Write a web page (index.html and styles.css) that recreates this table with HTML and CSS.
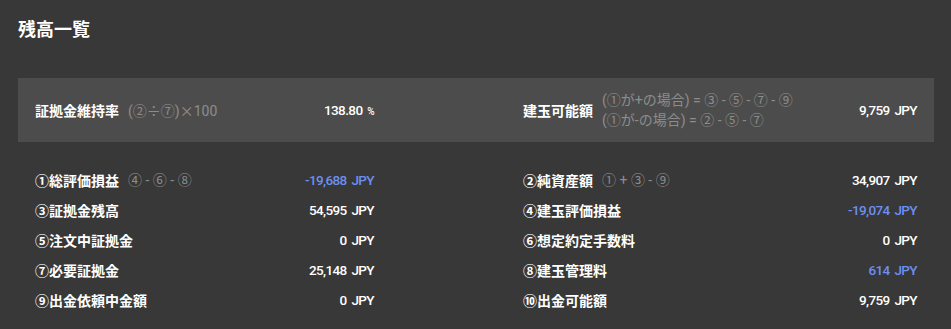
FILE: index.html
```html
<!DOCTYPE html>
<html lang="ja">
<head>
<meta charset="utf-8">
<title>残高一覧</title>
<link rel="stylesheet" href="styles.css">
</head>
<body>
<div class="page">
  <h1 class="title">残高一覧</h1>
  <div class="summary">
    <div class="cell">
      <span class="label">証拠金維持率</span>
      <span class="formula">(②<span class="sym">÷</span>⑦)<span class="sym">×</span>100</span>
      <span class="value">138.80 <span class="unit-pct">%</span></span>
    </div>
    <div class="cell">
      <span class="label">建玉可能額</span>
      <span class="formula multi">(①が+の場合) = ③ - ⑤ - ⑦ - ⑨<br>(①が-の場合) = ② - ⑤ - ⑦</span>
      <span class="value">9,759 JPY</span>
    </div>
  </div>
  <div class="details">
    <div class="cell row">
      <span class="label">①総評価損益</span>
      <span class="formula">④ - ⑥ - ⑧</span>
      <span class="value neg">-19,688 JPY</span>
    </div>
    <div class="cell row">
      <span class="label">②純資産額</span>
      <span class="formula">① + ③ - ⑨</span>
      <span class="value">34,907 JPY</span>
    </div>
    <div class="cell row">
      <span class="label">③証拠金残高</span>
      <span class="value">54,595 JPY</span>
    </div>
    <div class="cell row">
      <span class="label">④建玉評価損益</span>
      <span class="value neg">-19,074 JPY</span>
    </div>
    <div class="cell row">
      <span class="label">⑤注文中証拠金</span>
      <span class="value">0 JPY</span>
    </div>
    <div class="cell row">
      <span class="label">⑥想定約定手数料</span>
      <span class="value">0 JPY</span>
    </div>
    <div class="cell row">
      <span class="label">⑦必要証拠金</span>
      <span class="value">25,148 JPY</span>
    </div>
    <div class="cell row">
      <span class="label">⑧建玉管理料</span>
      <span class="value neg">614 JPY</span>
    </div>
    <div class="cell row">
      <span class="label">⑨出金依頼中金額</span>
      <span class="value">0 JPY</span>
    </div>
    <div class="cell row">
      <span class="label">⑩出金可能額</span>
      <span class="value">9,759 JPY</span>
    </div>
  </div>
</div>
</body>
</html>
```

FILE: styles.css
```css
html, body {
  margin: 0;
  padding: 0;
  background: #383838;
}
body {
  font-family: "Noto Sans CJK JP", "Noto Sans", sans-serif;
  color: #ffffff;
}
.page {
  padding: 16px 17px 0 18px;
}
.title {
  margin: 0;
  font-size: 18px;
  line-height: 24px;
  font-weight: 700;
  color: #ffffff;
}
.summary {
  margin-top: 38px;
  height: 64px;
  background: #4c4c4c;
  display: grid;
  grid-template-columns: 339px 1fr;
  column-gap: 149px;
  padding: 0 17px;
  align-items: center;
}
.details {
  margin-top: 23px;
  display: grid;
  grid-template-columns: 339px 1fr;
  column-gap: 149px;
  padding: 0 17px;
}
.cell {
  display: flex;
  align-items: center;
}
.row {
  height: 30px;
}
.label {
  font-size: 14px;
  font-weight: 700;
  line-height: 20px;
  white-space: nowrap;
}
.formula {
  margin-left: 9px;
  font-family: "Roboto", "Noto Sans CJK JP", sans-serif;
  font-size: 14px;
  line-height: 20px;
  color: #8c8c8c;
  white-space: nowrap;
}
.sym {
  font-family: "Noto Sans CJK JP", sans-serif;
}
.value {
  margin-left: auto;
  font-family: "Roboto", "Liberation Sans", sans-serif;
  font-size: 13.5px;
  font-weight: 500;
  letter-spacing: -0.6px;
  word-spacing: 2px;
  color: #ffffff;
  white-space: nowrap;
}
.value.neg {
  color: #6d8ff0;
}
.unit-pct {
  font-size: 10px;
}
```
